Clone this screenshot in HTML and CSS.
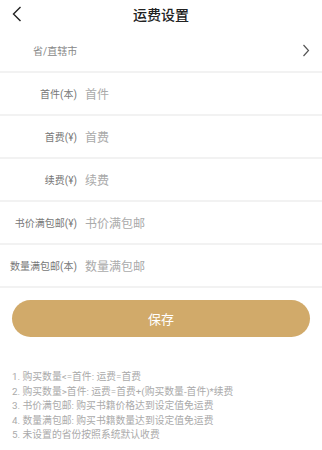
FILE: index.html
```html
<!DOCTYPE html>
<html lang="zh">
<head>
<meta charset="utf-8">
<link rel="stylesheet" href="styles.css">
</head>
<body>
<div class="page">
  <header class="topbar">
    <svg class="back" width="12" height="18" viewBox="0 0 12 18"><path d="M9.5 2 L2.5 9 L9.5 16" fill="none" stroke="#222" stroke-width="1.4"/></svg>
    <div class="title">运费设置</div>
  </header>
  <div class="row province">
    <span class="plabel">省/直辖市</span>
    <svg class="arrow" width="8" height="13" viewBox="0 0 8 13"><path d="M1.5 1 L6.5 6.5 L1.5 12" fill="none" stroke="#555" stroke-width="1.2"/></svg>
  </div>
  <div class="row"><span class="label">首件(本)</span><span class="ph">首件</span></div>
  <div class="row"><span class="label">首费(¥)</span><span class="ph">首费</span></div>
  <div class="row"><span class="label">续费(¥)</span><span class="ph">续费</span></div>
  <div class="row"><span class="label">书价满包邮(¥)</span><span class="ph">书价满包邮</span></div>
  <div class="row"><span class="label">数量满包邮(本)</span><span class="ph">数量满包邮</span></div>
  <div class="btnwrap"><button class="save">保存</button></div>
  <div class="notes">
    <div>1. 购买数量&lt;=首件: 运费=首费</div>
    <div>2. 购买数量&gt;首件: 运费=首费+(购买数量-首件)*续费</div>
    <div>3. 书价满包邮: 购买书籍价格达到设定值免运费</div>
    <div>4. 数量满包邮: 购买书籍数量达到设定值免运费</div>
    <div>5. 未设置的省份按照系统默认收费</div>
  </div>
</div>
</body>
</html>
```
FILE: styles.css
```css
* { box-sizing: border-box; margin: 0; padding: 0; }
body {
  background: #fff;
  font-family: "Roboto", "Noto Sans CJK SC", sans-serif;
  width: 322px;
}
.topbar {
  height: 30px;
  background: #fff;
  display: flex;
  align-items: center;
  justify-content: center;
  position: relative;
}
.back { position: absolute; left: 11px; top: 5px; }
.title { font-size: 14px; font-weight: 500; color: #222; line-height: 30px; }
.row {
  height: 43px;
  border-bottom: 2px solid #f2f2f2;
  display: flex;
  align-items: center;
}
.province { justify-content: space-between; padding: 0 12px 0 33px; }
.plabel { font-size: 10px; color: #888; }
.label {
  width: 77px;
  text-align: right;
  font-size: 10px;
  color: #777;
  white-space: nowrap;
}
.ph { margin-left: 8px; font-size: 12px; color: #aaa; }
.btnwrap { padding: 12px 12px 0; }
.save {
  width: 298px;
  height: 37px;
  border: none;
  border-radius: 19px;
  background: #d1aa6a;
  color: #fff;
  font-family: inherit;
  font-size: 13px;
  display: block;
}
.notes {
  padding: 33px 12px 0;
  font-size: 9.8px;
  line-height: 14.5px;
  color: #aaa;
}
```
